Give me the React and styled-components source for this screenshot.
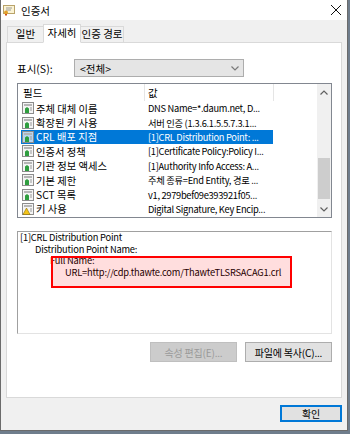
import styled, { createGlobalStyle } from "styled-components";

const GlobalStyle = createGlobalStyle`
    html, body {
        margin: 0;
        padding: 0;
        background: #6f7d8c;
    }
    body {
        font-family: "Noto Sans CJK KR", "Noto Sans", sans-serif;
        font-size: 10px;
        color: #000;
    }
`

const Window = styled.div`
    width: 346px;
    height: 430px;
    border: 1px solid #6b6b6b;
    border-top: none;
    background: #f0f0f0;
    display: flex;
    flex-direction: column;
`

const TitleBar = styled.div`
    height: 20px;
    background: #fff;
    display: flex;
    align-items: center;
    padding: 0 6px 0 2px;
    gap: 6px;
`

const TitleText = styled.span`
    font-size: 10.5px;
    flex: 1;
`

const Body = styled.div`
    flex: 1;
    padding: 3px 5px 0 5px;
    display: flex;
    flex-direction: column;
`

const TabStrip = styled.div`
    display: flex;
    align-items: flex-end;
    height: 19px;
    padding-left: 1px;
    position: relative;
    z-index: 1;
`

const Tab = styled.div`
    font-size: 10.5px;
    height: ${p => (p.$active ? "19px" : "16px")};
    width: ${p => p.$w}px;
    box-sizing: border-box;
    border: 1px solid #d9d9d9;
    border-bottom: ${p => (p.$active ? "1px solid #fff" : "none")};
    margin: ${p => (p.$active ? "0 -1px -1px" : "0")};
    background: ${p => (p.$active ? "#fff" : "#f0f0f0")};
    display: flex;
    align-items: center;
    justify-content: center;
    white-space: nowrap;
    line-height: 1;
`

const Panel = styled.div`
    height: 356px;
    box-sizing: border-box;
    background: #fff;
    border: 1px solid #d9d9d9;
    padding: 16px 9px 0 10px;
    display: flex;
    flex-direction: column;
`

const ShowRow = styled.div`
    display: flex;
    align-items: center;
    height: 18px;
`

const Label = styled.span`
    font-size: 10.5px;
    width: 57px;
`

const Select = styled.div`
    width: 170px;
    height: 18px;
    box-sizing: border-box;
    background: #e5e5e5;
    border: 1px solid #adadad;
    display: flex;
    align-items: center;
    justify-content: space-between;
    padding: 0 4px 0 5px;
    font-size: 10.5px;
`

const ListBox = styled.div`
    margin-top: 6px;
    height: 135px;
    box-sizing: border-box;
    border: 1px solid #828790;
    display: flex;
    overflow: hidden;
`

const ListMain = styled.div`
    flex: 1;
    display: flex;
    flex-direction: column;
`

const HeaderRow = styled.div`
    height: 17px;
    display: flex;
    align-items: center;
`

const HeaderCell = styled.div`
    width: ${p => p.$w}px;
    height: 17px;
    box-sizing: border-box;
    padding-left: ${p => p.$pad}px;
    border-right: ${p => (p.$sep ? "1px solid #e5e5e5" : "none")};
    font-size: 10.5px;
    display: flex;
    align-items: center;
`

const Rows = styled.div`
    display: flex;
    flex-direction: column;
    padding-left: 3px;
`

const Row = styled.div`
    display: flex;
    align-items: center;
    height: 14.4px;
    width: 252px;
    background: ${p => (p.$selected ? "#0078d7" : "transparent")};
    color: ${p => (p.$selected ? "#fff" : "#000")};
    white-space: nowrap;
`

const FieldCell = styled.div`
    width: 124px;
    display: flex;
    align-items: center;
    gap: 2px;
    padding-left: 1px;
    box-sizing: border-box;
    font-size: 10.3px;
    overflow: hidden;
`

const ValueCell = styled.div`
    width: 128px;
    padding-left: 3px;
    box-sizing: border-box;
    font-size: 9.3px;
    letter-spacing: -0.3px;
    overflow: hidden;
`

const ScrollBar = styled.div`
    width: 14px;
    background: #f0f0f0;
    display: flex;
    flex-direction: column;
    align-items: center;
`

const ScrollArrow = styled.div`
    height: 16px;
    width: 14px;
    display: flex;
    align-items: center;
    justify-content: center;
`

const ScrollTrack = styled.div`
    flex: 1;
    width: 12px;
    display: flex;
    flex-direction: column;
    justify-content: flex-end;
    padding-bottom: 2px;
`

const Thumb = styled.div`
    height: 41px;
    background: #cdcdcd;
`

const DetailBox = styled.div`
    position: relative;
    margin-top: 13px;
    height: 103px;
    box-sizing: border-box;
    border: 1px solid #e3e3e3;
    border-top-color: #a0a0a0;
    border-left-color: #a0a0a0;
    padding: 0 2px;
    font-size: 9.3px;
    letter-spacing: -0.2px;
    line-height: 11.7px;
`

const DetailLine = styled.div`
    padding-left: ${p => p.$indent * 15}px;
    white-space: nowrap;
`

const Highlight = styled.div`
    position: absolute;
    left: 33px;
    top: 24px;
    width: 241px;
    height: 32px;
    box-sizing: border-box;
    border: 2px solid #f00;
    background: rgba(255, 0, 0, 0.13);
`

const ButtonRow = styled.div`
    margin-top: 8px;
    display: flex;
    justify-content: flex-end;
    gap: 8px;
`

const Button = styled.div`
    width: ${p => p.$w}px;
    height: ${p => p.$h}px;
    box-sizing: border-box;
    background: ${p => (p.$disabled ? "#cccccc" : "#e1e1e1")};
    color: ${p => (p.$disabled ? "#9a9a9a" : "#000")};
    border: ${p => (p.$default ? "2px solid #0078d7" : p.$disabled ? "1px solid #bfbfbf" : "1px solid #adadad")};
    display: flex;
    align-items: center;
    justify-content: center;
    font-size: 10px;
    letter-spacing: -0.2px;
`

const Footer = styled.div`
    display: flex;
    justify-content: flex-end;
    padding: 7px 0 0 0;
`

function CertIcon() {
    return (
        <svg width="12" height="12" viewBox="0 0 12 12">
            <rect x="0.5" y="1.5" width="11" height="8" fill="#fbf3d4" stroke="#b9a36a" />
            <line x1="3" y1="4" x2="9" y2="4" stroke="#9b9b9b" />
            <line x1="3" y1="6" x2="8" y2="6" stroke="#9b9b9b" />
            <circle cx="3" cy="8.5" r="2" fill="#e2a12a" />
            <path d="M2 10 L2 12 L3 11 L4 12 L4 10 Z" fill="#c8501e" />
        </svg>
    );
}

function FieldIcon({ warn, selected }) {
    return (
        <svg width="12" height="12" viewBox="0 0 12 12">
            <rect x="0.5" y="0.5" width="11" height="11" fill={selected ? "#b7d4ee" : "#f4f4f4"} stroke="#8c8c8c" />
            <rect x="2" y="2" width="8" height="2" fill="#b5b5b5" />
            {warn ? (
                <path d="M1 11.5 L4.5 5 L8 11.5 Z" fill="#f5c518" stroke="#8a6d00" strokeWidth="0.6" />
            ) : (
                <path d="M3 11 L3 6.5 L5 5 L7 6.5 L7 11 Z" fill="#2f9e3f" />
            )}
            <line x1="8" y1="6" x2="10" y2="6" stroke="#9a9a9a" />
            <line x1="8" y1="8" x2="10" y2="8" stroke="#9a9a9a" />
        </svg>
    );
}

function Chevron({ up, color = "#606060" }) {
    return (
        <svg width="8" height="5" viewBox="0 0 8 5">
            <path d={up ? "M0.5 4.5 L4 1 L7.5 4.5" : "M0.5 0.5 L4 4 L7.5 0.5"} fill="none" stroke={color} strokeWidth="1.2" />
        </svg>
    );
}

const rows = [
    { field: "주체 대체 이름", value: "DNS Name=*.daum.net, D..." },
    { field: "확장된 키 사용", value: "서버 인증 (1.3.6.1.5.5.7.3.1..." },
    { field: "CRL 배포 지점", value: "[1]CRL Distribution Point: ...", selected: true },
    { field: "인증서 정책", value: "[1]Certificate Policy:Policy I..." },
    { field: "기관 정보 액세스", value: "[1]Authority Info Access: A..." },
    { field: "기본 제한", value: "주체 종류=End Entity, 경로 ..." },
    { field: "SCT 목록", value: "v1, 2979bef09e393921f05..." },
    { field: "키 사용", value: "Digital Signature, Key Encip...", warn: true },
];

export default function App() {
    return (
        <>
            <GlobalStyle />
            <Window>
                <TitleBar>
                    <CertIcon />
                    <TitleText>인증서</TitleText>
                    <svg width="10" height="10" viewBox="0 0 10 10">
                        <path d="M0 0 L10 10 M10 0 L0 10" stroke="#111" strokeWidth="1" />
                    </svg>
                </TitleBar>
                <Body>
                    <TabStrip>
                        <Tab $w={37}>일반</Tab>
                        <Tab $w={38} $active>자세히</Tab>
                        <Tab $w={44}>인증 경로</Tab>
                    </TabStrip>
                    <Panel>
                        <ShowRow>
                            <Label>표시(S):</Label>
                            <Select>
                                <span>&lt;전체&gt;</span>
                                <Chevron color="#7a7a7a" />
                            </Select>
                        </ShowRow>
                        <ListBox>
                            <ListMain>
                                <HeaderRow>
                                    <HeaderCell $w={127} $pad={5} $sep>필드</HeaderCell>
                                    <HeaderCell $w={129} $pad={3} $sep>값</HeaderCell>
                                </HeaderRow>
                                <Rows>
                                    {rows.map(r => (
                                        <Row key={r.field} $selected={r.selected}>
                                            <FieldCell>
                                                <FieldIcon warn={r.warn} selected={r.selected} />
                                                <span>{r.field}</span>
                                            </FieldCell>
                                            <ValueCell>{r.value}</ValueCell>
                                        </Row>
                                    ))}
                                </Rows>
                            </ListMain>
                            <ScrollBar>
                                <ScrollArrow><Chevron up /></ScrollArrow>
                                <ScrollTrack><Thumb /></ScrollTrack>
                                <ScrollArrow><Chevron /></ScrollArrow>
                            </ScrollBar>
                        </ListBox>
                        <DetailBox>
                            <DetailLine $indent={0}>[1]CRL Distribution Point</DetailLine>
                            <DetailLine $indent={1}>Distribution Point Name:</DetailLine>
                            <DetailLine $indent={2}>Full Name:</DetailLine>
                            <DetailLine $indent={3}>URL=http://cdp.thawte.com/ThawteTLSRSACAG1.crl</DetailLine>
                            <Highlight />
                        </DetailBox>
                        <ButtonRow>
                            <Button $w={87} $h={20} $disabled>속성 편집(E)...</Button>
                            <Button $w={87} $h={20}>파일에 복사(C)...</Button>
                        </ButtonRow>
                    </Panel>
                    <Footer>
                        <Button $w={62} $h={17} $default>확인</Button>
                    </Footer>
                </Body>
            </Window>
        </>
    );
}
